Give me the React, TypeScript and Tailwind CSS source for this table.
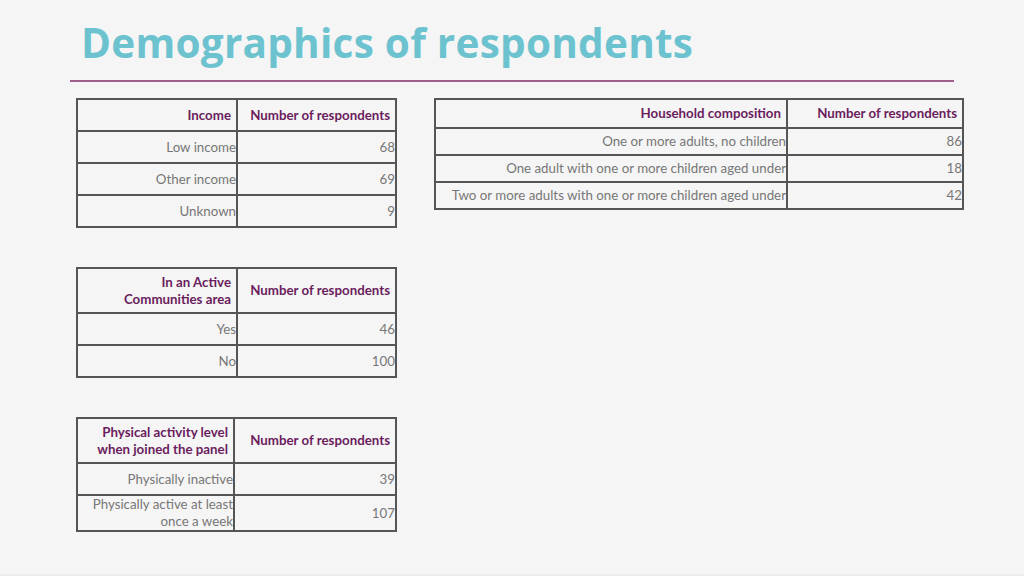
const head = "text-[#6b1d5e] font-bold text-[13.3px] leading-[17px] text-right align-middle border-2 border-[#555] pr-[5px] pl-2 py-0";
const cell = "text-[#777] text-[13.3px] leading-[17px] text-right align-middle border-2 border-[#555] pl-2 pr-0 py-0";

type Table = {
  label: React.ReactNode;
  col1: string;
  headH: string;
  rowH: string;
  rows: [React.ReactNode, string][];
};

const DataTable = ({ t }: { t: Table }) => (
  <table className="border-collapse w-full table-fixed">
    <colgroup>
      <col className={t.col1} />
      <col />
    </colgroup>
    <thead>
      <tr className={t.headH}>
        <th className={head}>{t.label}</th>
        <th className={head}>Number of respondents</th>
      </tr>
    </thead>
    <tbody>
      {t.rows.map(([name, n], i) => (
        <tr key={i} className={t.rowH}>
          <td className={cell}>{name}</td>
          <td className={cell}>{n}</td>
        </tr>
      ))}
    </tbody>
  </table>
);

const income: Table = {
  label: "Income",
  col1: "w-[160px]",
  headH: "h-[32px]",
  rowH: "h-[32px]",
  rows: [
    ["Low income", "68"],
    ["Other income", "69"],
    ["Unknown", "9"],
  ],
};

const active: Table = {
  label: (
    <>
      In an Active
      <br />
      Communities area
    </>
  ),
  col1: "w-[160px]",
  headH: "h-[45px]",
  rowH: "h-[32px]",
  rows: [
    ["Yes", "46"],
    ["No", "100"],
  ],
};

const activity: Table = {
  label: (
    <>
      Physical activity level
      <br />
      when joined the panel
    </>
  ),
  col1: "w-[157px]",
  headH: "h-[45px]",
  rowH: "h-[32px]",
  rows: [
    ["Physically inactive", "39"],
    [
      <>
        Physically active at least
        <br />
        once a week
      </>,
      "107",
    ],
  ],
};

const household: Table = {
  label: "Household composition",
  col1: "w-[352px]",
  headH: "h-[29px]",
  rowH: "h-[27px]",
  rows: [
    ["One or more adults, no children", "86"],
    ["One adult with one or more children aged under", "18"],
    ["Two or more adults with one or more children aged under", "42"],
  ],
};

export default function App() {
  return (
    <div className="w-[1024px] h-[576px] bg-[#f5f5f5] overflow-hidden font-['Lato','Liberation_Sans',sans-serif] border-b-2 border-[#ececec]">
      <h1 className="pl-[81px] pt-[18px] h-[68px] font-['Open_Sans',sans-serif] font-bold text-[40.5px] leading-[50px] text-[#6cc3cf] tracking-[0.25px]">
        Demographics of respondents
      </h1>
      <div className="ml-[70px] mt-[12px] w-[884px] h-[2px] bg-[#9e5f8c]" />
      <div className="flex gap-[37px] ml-[76px] mt-[16px] items-start">
        <div className="flex flex-col gap-[39px] w-[321px]">
          <DataTable t={income} />
          <DataTable t={active} />
          <DataTable t={activity} />
        </div>
        <div className="w-[530px]">
          <DataTable t={household} />
        </div>
      </div>
    </div>
  );
}
